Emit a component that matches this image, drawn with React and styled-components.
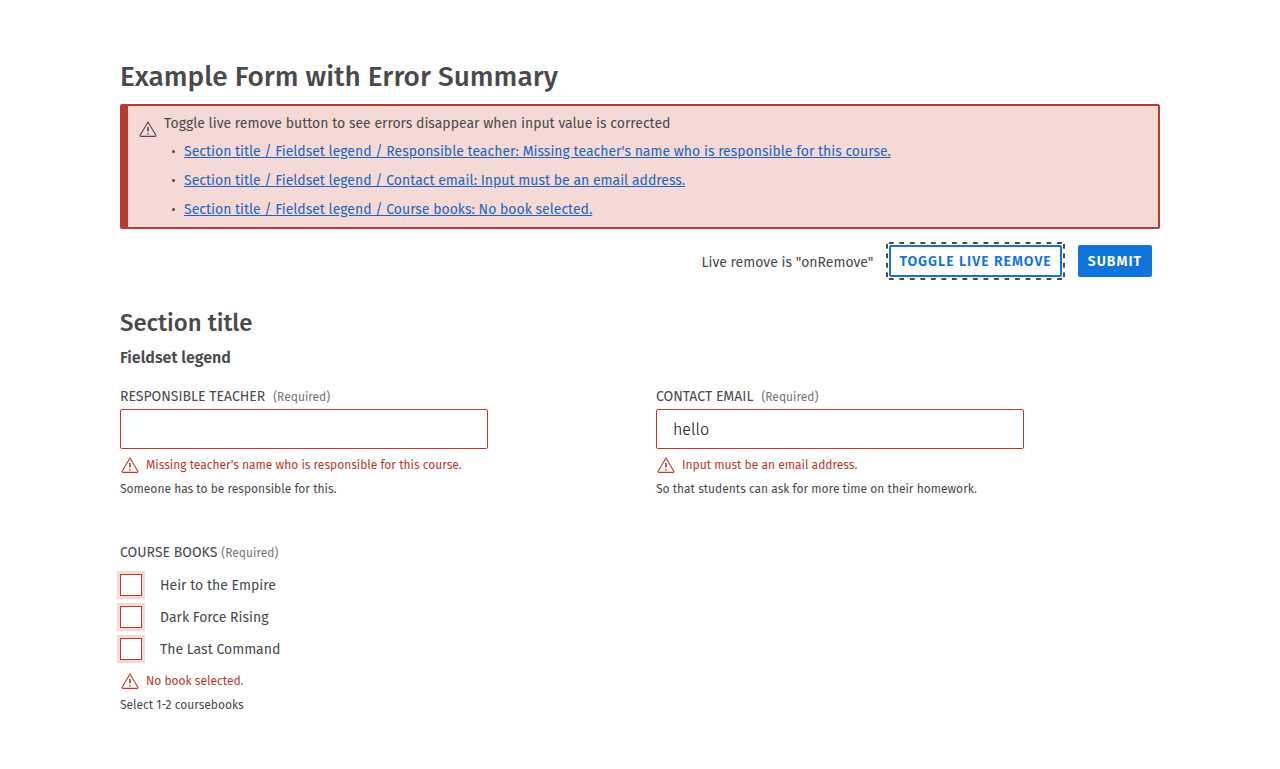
import React, { useId, useState } from "react";
import styled, { createGlobalStyle } from "styled-components";

const GlobalStyle = createGlobalStyle`
  *, *::before, *::after { box-sizing: border-box; }
  body {
    margin: 0;
    background: #fff;
    color: #4a4a4a;
    font-family: "Fira Sans", "Noto Sans", sans-serif;
    font-size: 14px;
    line-height: 24px;
  }
`;

const Page = styled.main`
  padding: 56px 120px 48px;
`;

const PageTitle = styled.h1`
  margin: 0;
  padding: 0 0 6px;
  font-size: 28px;
  line-height: 42px;
  font-weight: 500;
`;

const Summary = styled.section`
  display: flex;
  gap: 7px;
  padding: 6px 11px 3px;
  border: 2px solid #b93a2e;
  border-left-width: 8px;
  border-radius: 2px;
  background: #f5d9d6;
`;

const SummaryIcon = styled.span`
  display: flex;
  flex: none;
  padding-top: 9px;
`;

const SummaryText = styled.p`
  margin: 0;
`;

const SummaryList = styled.ul`
  margin: 1px 0 0;
  padding: 0;
  list-style: none;
`;

const SummaryItem = styled.li`
  display: flex;
  align-items: center;
  gap: 9px;
  padding-left: 8px;
  line-height: 29px;

  &::before {
    content: "";
    width: 3px;
    height: 3px;
    border-radius: 50%;
    background: currentColor;
  }
`;

const SummaryLink = styled.a`
  color: #1c66bd;
  text-decoration: underline;
`;

const Actions = styled.div`
  display: flex;
  justify-content: flex-end;
  align-items: center;
  gap: 16px;
  padding: 16px 8px 24px 0;
`;

const Status = styled.span`
  padding-top: 4px;
  line-height: 28px;
`;

const Button = styled.button`
  --dash: transparent 25%, #4a4a4a 25% 75%, transparent 75%;
  position: relative;
  height: 32px;
  padding: 2px 8px 0;
  border: 2px solid #1174dd;
  border-radius: 2px;
  background: ${(p) => (p.$primary ? "#1174dd" : "#fff")};
  color: ${(p) => (p.$primary ? "#fff" : "#1174dd")};
  font: inherit;
  font-weight: 600;
  text-transform: uppercase;
  letter-spacing: 1px;
  cursor: pointer;
  outline: none;

  /* Focus ring: 17 dashes along each long side, 4 along each short side. */
  &::after {
    content: "";
    display: ${(p) => (p.$focused ? "block" : "none")};
    position: absolute;
    inset: -5px;
    pointer-events: none;
    background:
      linear-gradient(90deg, var(--dash)) top left / calc(100% / 17) 2px repeat-x,
      linear-gradient(90deg, var(--dash)) bottom left / calc(100% / 17) 2px repeat-x,
      linear-gradient(var(--dash)) top left / 2px calc(100% / 4) repeat-y,
      linear-gradient(var(--dash)) top right / 2px calc(100% / 4) repeat-y;
  }
`;

const SectionTitle = styled.h2`
  margin: 0;
  padding: 6px 0;
  font-size: 24px;
  line-height: 32px;
  font-weight: 500;
`;

const Fieldset = styled.fieldset`
  min-width: 0;
  margin: 0;
  padding: 0;
  border: 0;
`;

const Legend = styled.legend`
  padding: 0;
  font-size: 16px;
  line-height: 26px;
  font-weight: 600;
`;

const Columns = styled.div`
  display: grid;
  grid-template-columns: 1fr 1fr;
  gap: 32px;
  padding-top: 14px;
`;

const Field = styled.div`
  display: flex;
  flex-direction: column;
`;

const Label = styled.label`
  display: flex;
  gap: 8px;
  text-transform: uppercase;
`;

const Required = styled.span`
  color: #757575;
  font-size: 12px;
  text-transform: none;
`;

const Input = styled.input`
  width: 100%;
  max-width: 368px;
  height: 40px;
  padding: 0 16px;
  border: 1px solid #b93a2e;
  border-radius: 2px;
  background: #fff;
  color: #000;
  font: inherit;
  font-size: 16px;
  font-weight: 300;
  outline: none;
`;

const ErrorLine = styled.p`
  display: flex;
  align-items: center;
  gap: 7px;
  margin: 0;
  padding: 4px 0 0 1px;
  color: #b93a2e;
  font-size: 12px;
`;

const Hint = styled.p`
  margin: 0;
  font-size: 12px;
`;

const Group = styled(Fieldset)`
  margin-top: 40px;
`;

const GroupLegend = styled.legend`
  display: flex;
  gap: 4px;
  padding: 0 0 4px;
  text-transform: uppercase;
`;

const Option = styled.label`
  display: flex;
  align-items: center;
  gap: 18px;
  height: 32px;
`;

const OptionText = styled.span`
  padding-top: 2px;
`;

const Checkbox = styled.input`
  appearance: none;
  width: 22px;
  height: 22px;
  margin: 0;
  border: 1px solid #b93a2e;
  background: #fff;
  box-shadow: 0 0 0 3px #f5d9d6;

  &:checked {
    background: #b93a2e;
  }
`;

function WarningIcon() {
  return (
    <svg width="18" height="16" viewBox="0 0 18 16" fill="none" stroke="currentColor" aria-hidden="true">
      <path d="M9 1 17 14.5q0 .9-.8.9H1.8q-.8 0-.8-.9Z" strokeWidth="1.1" strokeLinejoin="round" />
      <path d="M9 6v4.5" strokeWidth="1.6" />
      <path d="M9 12v1.4" strokeWidth="1.4" />
    </svg>
  );
}

function FieldError({ id, children }) {
  return (
    <ErrorLine id={id}>
      <WarningIcon />
      {children}
    </ErrorLine>
  );
}

function TextField({ id, label, error, hint, ...rest }) {
  const errorId = useId();
  return (
    <Field>
      <Label htmlFor={id}>
        {label} <Required>(Required)</Required>
      </Label>
      <Input id={id} required aria-invalid="true" aria-describedby={errorId} {...rest} />
      <FieldError id={errorId}>{error}</FieldError>
      <Hint>{hint}</Hint>
    </Field>
  );
}

const problems = [
  { target: "teacher", text: "Responsible teacher: Missing teacher's name who is responsible for this course." },
  { target: "email", text: "Contact email: Input must be an email address." },
  { target: "books", text: "Course books: No book selected." },
];

const books = ["Heir to the Empire", "Dark Force Rising", "The Last Command"];

export default function App() {
  const [mode, setMode] = useState("onRemove");
  return (
    <>
      <GlobalStyle />
      <Page>
        <PageTitle>Example Form with Error Summary</PageTitle>
        <form noValidate onSubmit={(e) => e.preventDefault()}>
          <Summary>
            <SummaryIcon>
              <WarningIcon />
            </SummaryIcon>
            <div>
              <SummaryText>Toggle live remove button to see errors disappear when input value is corrected</SummaryText>
              <SummaryList>
                {problems.map((p) => (
                  <SummaryItem key={p.target}>
                    <SummaryLink href={`#${p.target}`}>{`Section title / Fieldset legend / ${p.text}`}</SummaryLink>
                  </SummaryItem>
                ))}
              </SummaryList>
            </div>
          </Summary>
          <Actions>
            <Status>{`Live remove is "${mode}"`}</Status>
            <Button type="button" $focused onClick={() => setMode(mode === "onRemove" ? "onSubmit" : "onRemove")}>
              Toggle live remove
            </Button>
            <Button type="submit" $primary>
              Submit
            </Button>
          </Actions>
          <SectionTitle>Section title</SectionTitle>
          <Fieldset>
            <Legend>Fieldset legend</Legend>
            <Columns>
              <TextField
                id="teacher"
                type="text"
                label="Responsible teacher"
                error="Missing teacher's name who is responsible for this course."
                hint="Someone has to be responsible for this."
              />
              <TextField
                id="email"
                type="email"
                defaultValue="hello"
                label="Contact email"
                error="Input must be an email address."
                hint="So that students can ask for more time on their homework."
              />
            </Columns>
            <Group id="books">
              <GroupLegend>
                Course books <Required>(Required)</Required>
              </GroupLegend>
              {books.map((title) => (
                <Option key={title}>
                  <Checkbox type="checkbox" name="books" value={title} />
                  <OptionText>{title}</OptionText>
                </Option>
              ))}
              <FieldError>No book selected.</FieldError>
              <Hint>Select 1-2 coursebooks</Hint>
            </Group>
          </Fieldset>
        </form>
      </Page>
    </>
  );
}
